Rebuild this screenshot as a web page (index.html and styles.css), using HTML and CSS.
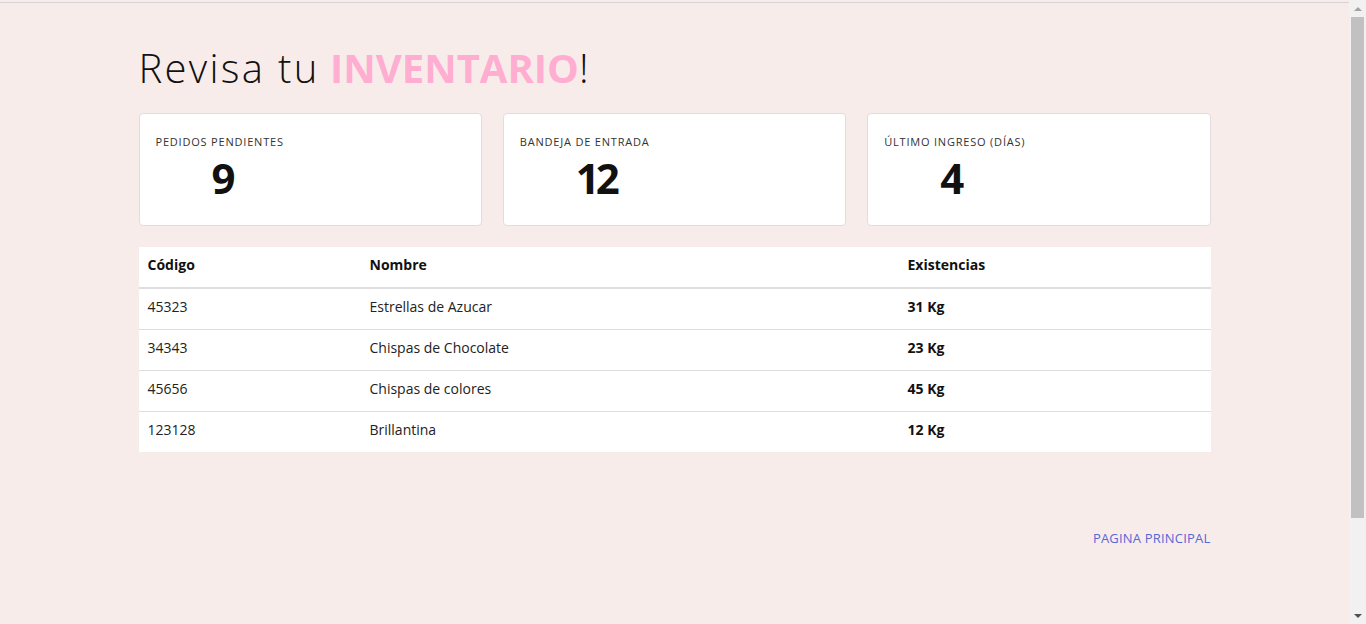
FILE: index.html
```html
<!DOCTYPE html>
<html lang="es">
<head>
<meta charset="utf-8">
<title>Inventario</title>
<link rel="stylesheet" href="styles.css">
</head>
<body>
<div class="topline"></div>
<div class="viewport">
  <div class="page">
    <main class="container">
      <h1 class="title"><span class="light">Revisa tu</span> <strong class="accent">INVENTARIO</strong>!</h1>

      <section class="cards">
        <div class="card">
          <p class="card-label">PEDIDOS PENDIENTES</p>
          <p class="card-value">9</p>
        </div>
        <div class="card">
          <p class="card-label">BANDEJA DE ENTRADA</p>
          <p class="card-value">12</p>
        </div>
        <div class="card">
          <p class="card-label">ÚLTIMO INGRESO (DÍAS)</p>
          <p class="card-value">4</p>
        </div>
      </section>

      <table class="inventory">
        <thead>
          <tr>
            <th class="col-code">Código</th>
            <th class="col-name">Nombre</th>
            <th class="col-stock">Existencias</th>
          </tr>
        </thead>
        <tbody>
          <tr><td>45323</td><td>Estrellas de Azucar</td><td class="stock">31 Kg</td></tr>
          <tr><td>34343</td><td>Chispas de Chocolate</td><td class="stock">23 Kg</td></tr>
          <tr><td>45656</td><td>Chispas de colores</td><td class="stock">45 Kg</td></tr>
          <tr><td>123128</td><td>Brillantina</td><td class="stock">12 Kg</td></tr>
        </tbody>
      </table>

      <div class="footer-link">
        <a href="#" class="home-link">PAGINA PRINCIPAL</a>
      </div>
    </main>
  </div>
  <div class="scrollbar" aria-hidden="true">
    <div class="arrow arrow-up"></div>
    <div class="track"><div class="thumb"></div></div>
    <div class="arrow arrow-down"></div>
  </div>
</div>
</body>
</html>
```

FILE: styles.css
```css
html, body {
  margin: 0;
  padding: 0;
  height: 100%;
  overflow: hidden;
}
body {
  background: #f8eceb;
  font-family: "Open Sans", "Liberation Sans", sans-serif;
  color: #212529;
  font-size: 14px;
  display: flex;
  flex-direction: column;
}
.topline {
  margin-top: 2px;
  height: 1px;
  flex: none;
  background: #d4d4d4;
}
.viewport {
  flex: 1;
  display: flex;
  min-height: 0;
}
.page {
  flex: 1;
  overflow: hidden;
}
.container {
  max-width: 1072px;
  margin: 0 auto;
}
.title {
  margin: 0;
  padding-top: 38px;
  font-size: 40px;
  line-height: 54px;
  font-weight: 300;
  color: #111;
}
.light {
  letter-spacing: 2.3px;
}
.accent {
  font-weight: 700;
  color: #ffaed1;
}
.cards {
  margin-top: 18px;
  display: grid;
  grid-template-columns: repeat(3, 1fr);
  gap: 21px;
}
.card {
  box-sizing: border-box;
  background: #fff;
  border: 1px solid #e2dcdc;
  border-radius: 4px;
  height: 113px;
  padding: 19px 16px 0;
}
.card-label {
  margin: 0;
  font-size: 11px;
  letter-spacing: 0.8px;
  line-height: 18px;
  color: #333;
}
.card-value {
  margin: 5px 0 0;
  padding-left: 56px;
  font-size: 42px;
  font-weight: 700;
  line-height: 44px;
  letter-spacing: -4px;
  color: #111;
}
.inventory {
  margin-top: 21px;
  width: 100%;
  border-collapse: collapse;
  background: #fff;
}
.inventory th,
.inventory td {
  text-align: left;
  padding: 7px 9px 12px;
  line-height: 21px;
  border-top: 1px solid #dedede;
}
.inventory thead th {
  border-top: none;
  border-bottom: 2px solid #dedede;
  font-weight: 700;
  color: #111;
}
.inventory tbody tr:first-child td {
  border-top: none;
}
.inventory td {
  color: #222;
}
.col-code { width: 204px; }
.col-name { width: 520px; }
.inventory .stock {
  font-weight: 700;
  color: #111;
}
.footer-link {
  margin-top: 76px;
  text-align: right;
}
.home-link {
  color: #5468d6;
  text-decoration: none;
  font-size: 13px;
  letter-spacing: 0.2px;
}
.scrollbar {
  flex: none;
  width: 17px;
  background: #f1f1f1;
  display: flex;
  flex-direction: column;
  margin-top: -3px;
}
.arrow {
  height: 17px;
  flex: none;
  display: flex;
  align-items: center;
  justify-content: center;
}
.arrow::before {
  content: "";
  width: 0;
  height: 0;
  border-left: 4px solid transparent;
  border-right: 4px solid transparent;
}
.arrow-up::before {
  border-bottom: 4px solid #a3a3a3;
}
.arrow-down::before {
  border-top: 4px solid #505050;
}
.track {
  flex: 1;
  padding: 0 2px;
}
.thumb {
  height: 501px;
  background: #c1c1c1;
}
```
